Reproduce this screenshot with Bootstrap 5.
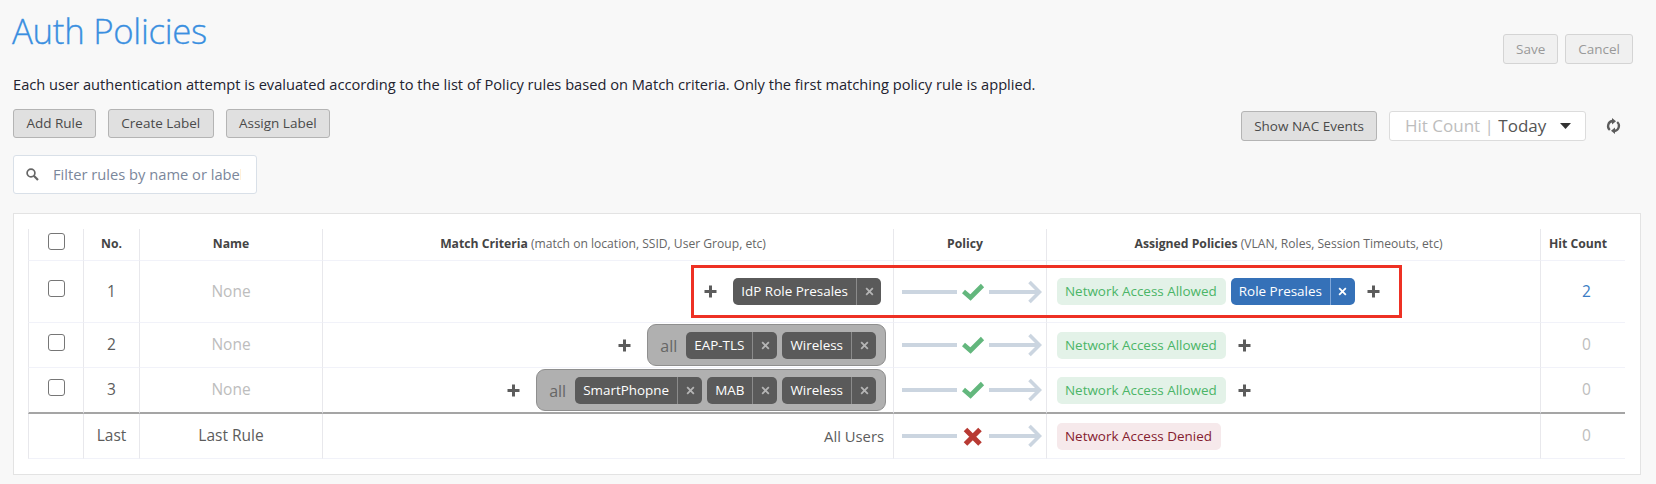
<!DOCTYPE html>
<html lang="en">
<head>
    <meta charset="UTF-8">
    <meta name="viewport" content="width=device-width, initial-scale=1.0">
    <title>Auth Policies</title>

    <link href="https://cdn.jsdelivr.net/npm/bootstrap@5.3.2/dist/css/bootstrap.min.css" rel="stylesheet">
    <script src="https://cdn.jsdelivr.net/npm/bootstrap@5.3.2/dist/js/bootstrap.bundle.min.js"></script>

    <style>
        body {
            height: 484px;
            overflow: hidden;
            background-color: #f8f8f8;
            font-family: "Open Sans", "Noto Sans", sans-serif;
            font-size: 15px;
            color: #5c5c5c;
        }

        .page-wrap {
            padding: 0 15px 0 13px;
        }

        .page-head {
            height: 72px;
            padding-top: 11px;
        }

        .page-title {
            margin-left: -1px;
            font-size: 34.8px;
            font-weight: 300;
            line-height: 40px;
            letter-spacing: -0.3px;
            color: #3a8fe0;
            -webkit-text-stroke: 0.3px #3a8fe0;
        }

        .head-actions {
            padding: 23px 8px 0 0;
            gap: 7px;
        }

        .intro-text {
            font-size: 14.64px;
            line-height: 24px;
            color: #23232f;
        }

        .btn-tool {
            height: 30px;
            padding: 0 12px;
            border: 1px solid #b4b4b4;
            border-radius: 3px;
            background-color: #e0e0e0;
            color: #4a4a4a;
            font-size: 13.5px;
            line-height: 27px;
        }

        .btn-tool:disabled {
            opacity: 1;
            border-color: #d4d4d4;
            background-color: #f0f0f0;
            color: #999;
        }

        .tool-row {
            height: 31px;
            margin-top: 13px;
        }

        .tool-left {
            gap: 12px;
        }

        .tool-left .btn-tool {
            height: 29px;
            padding: 0 12.4px;
        }

        .tool-right {
            height: 30px;
            margin-top: 2px;
            padding-right: 20px;
        }

        .hit-select {
            width: 197px;
            height: 30px;
            margin: 0 20px 0 12px;
            padding: 0 14px 0 15px;
            border: 1px solid #dcdcdc;
            border-radius: 3px;
            background-color: #fff;
            font-size: 17px;
            line-height: 26px;
            color: #555;
        }

        .hit-select .hit-label,
        .none-text,
        .hit-zero {
            color: #bdbdbd;
        }

        .filter-box {
            width: 244px;
            height: 39px;
            margin-top: 15px;
            padding: 0 14px 0 12px;
            border: 1px solid #d9e0e8;
            border-radius: 3px;
            background-color: #fff;
        }

        .filter-box input {
            width: 188px;
            margin-left: 14px;
            padding: 0;
            border: 0;
            font-size: 14.7px;
            outline: 0;
        }

        .filter-box input::placeholder {
            color: #7b879b;
            opacity: 1;
        }

        .rules-panel {
            height: 262px;
            margin-top: 19px;
            padding: 15px 15px 0 14px;
            border: 1px solid #e3e3e3;
            background-color: #fff;
        }

        .rules-table {
            width: 1597px;
            table-layout: fixed;
            border-collapse: separate;
            border-spacing: 0;
            margin: 0;
            color: #5c5c5c;
        }

        .rules-table > :not(caption) > * > * {
            padding: 0;
            border-width: 0 0 1px 1px;
            border-style: solid;
            border-color: #f1f2f9 #f1f2f9 #f1f2f9 #e8e8ec;
            font-size: 15.5px;
            vertical-align: middle;
            text-align: center;
            background: none;
        }

        .rules-table > thead > tr > th {
            height: 32px;
            font-size: 12.2px;
            font-weight: 700;
            color: #444;
        }

        .rules-table thead th small {
            font-size: 12.1px;
            font-weight: 400;
            color: #666;
        }

        .rules-table > thead > tr > th.th-shift { padding-right: 10px; }
        .rules-table > tbody > tr > td.cell-hits { padding-left: 7px; }

        .rules-table .row-tall td { height: 62px; }
        .rules-table .row-mid td { height: 45px; }
        .rules-table > tbody > .row-end > td { height: 46px; border-bottom: 2px solid #a5a5a5; }
        .rules-table .row-last td { height: 45px; }

        .rules-table > tbody > tr > td.cell-match { padding-right: 12px; }
        .rules-table > tbody > tr > td.cell-group { padding-right: 7px; }
        .rules-table > tbody > tr > td.cell-assign { padding-left: 10px; }
        .rules-table > tbody > tr > td.cell-users { padding-right: 9px; font-size: 14.8px; text-align: right; }

        .pick {
            display: block;
            width: 17px;
            height: 17px;
            margin: -6px auto 0 19px;
            border: 1px solid #767676;
            border-radius: 3px;
            background: #fff;
            appearance: none;
        }

        .tag {
            display: inline-flex;
            height: 27px;
            border-radius: 5px;
            background-color: #5a5a5a;
            color: #fff;
            font-size: 13.45px;
            line-height: 26px;
            white-space: nowrap;
        }

        .tag-text {
            padding: 0 8px;
        }

        .tag-close {
            display: flex;
            align-items: center;
            justify-content: center;
            width: 25px;
            border-left: 1px solid #8b8b8b;
            color: #b5b5b5;
        }

        .tag-role { margin-left: 5px; background-color: #3571b8; }
        .tag-role .tag-close { border-color: #7fa6d8; color: #fff; }
        .tag-allow { background-color: #e3f2e8; color: #4bb567; }
        .tag-deny { background-color: #f6e9eb; color: #85202f; }
        .tag-allow .tag-text, .tag-deny .tag-text { padding: 0 9px 0 8px; }

        .tag-group {
            height: 42px;
            padding: 0 9px 0 12px;
            gap: 5px;
            border: 1px solid #8f8f8f;
            border-radius: 9px;
            background-color: #b0b0b0;
            font-size: 16px;
            color: #666;
        }

        .tag-group .group-mode {
            margin-right: 4px;
            padding-top: 2px;
        }

        .add-after { margin-left: 12px; }

        .marked-flow {
            position: absolute;
            left: 677px;
            top: 51px;
            width: 711px;
            height: 53px;
            border: 3px solid #ee3124;
            pointer-events: none;
        }

        svg { display: block; flex: none; }
    </style>
</head>
<body>

    <!-- Icon shapes used in the rows -->
    <svg class="d-none">
        <symbol id="icon-plus" viewBox="0 0 13 13">
            <path d="M5 0.5h3v4.5h4.5v3H8v4.5H5V8H0.500V5H5z" fill="#5c5c5c"/>
        </symbol>
        <symbol id="icon-close" viewBox="0 0 10 10">
            <path d="M1.300 1.300l7.400 7.400M8.700 1.300l-7.400 7.400" stroke="currentColor" stroke-width="2" fill="none"/>
        </symbol>
        <symbol id="flow-line" viewBox="0 0 140 24">
            <path d="M0 12h55M87 12h50" stroke="#cbd5e0" stroke-width="3.800" fill="none"/>
            <path d="M127.500 2l10 10-10 10" stroke="#cbd5e0" stroke-width="3.600" fill="none"/>
        </symbol>
        <symbol id="flow-allow" viewBox="0 0 140 24">
            <use href="#flow-line" width="140" height="24"/>
            <path d="M61.500 11.500l7 6L80.500 5.500" stroke="#63b77d" stroke-width="4.600" fill="none"/>
        </symbol>
        <symbol id="flow-deny" viewBox="0 0 140 24">
            <use href="#flow-line" width="140" height="24"/>
            <path d="M63.500 5.500l14.500 14.500M78 5.500L63.500 20" stroke="#b83a33" stroke-width="5" fill="none"/>
        </symbol>
    </svg>

    <div class="page-wrap">
        <div class="page-head d-flex justify-content-between">
            <h1 class="page-title mb-0">Auth Policies</h1>
            <div class="head-actions d-flex">
                <button class="btn btn-tool" disabled>Save</button>
                <button class="btn btn-tool" disabled>Cancel</button>
            </div>
        </div>

        <p class="intro-text mb-0">Each user authentication attempt is evaluated according to the list of Policy rules based on Match criteria. Only the first matching policy rule is applied.</p>

        <div class="tool-row d-flex justify-content-between">
            <div class="tool-left d-flex">
                <button class="btn btn-tool">Add Rule</button>
                <button class="btn btn-tool">Create Label</button>
                <button class="btn btn-tool">Assign Label</button>
            </div>
            <div class="tool-right d-flex align-items-center">
                <button class="btn btn-tool">Show NAC Events</button>
                <div class="hit-select d-flex align-items-center justify-content-between">
                    <span><span class="hit-label">Hit Count |</span> Today</span>
                    <svg width="11" height="6" viewBox="0 0 11 6"><path d="M0 0h11L5.500 6z" fill="#333"/></svg>
                </div>
                <svg width="15" height="16" viewBox="0 0 15 16">
                    <path d="M3.800 12A5.200 5.200 0 0 1 6.300 3M11.200 4A5.200 5.200 0 0 1 8.700 13" stroke="#5c5c5c" stroke-width="2.300" fill="none"/>
                    <path d="M6 0l4 3.200L6 6.400zM9 9.600v6.400l-4-3.200z" fill="#5c5c5c"/>
                </svg>
            </div>
        </div>

        <div class="filter-box d-flex align-items-center">
            <svg width="13" height="13" viewBox="0 0 13 13">
                <circle cx="5" cy="5" r="3.900" stroke="#666" stroke-width="1.700" fill="none"/>
                <path d="M7.800 7.800l4.200 4.200" stroke="#666" stroke-width="2.200"/>
            </svg>
            <input type="text" placeholder="Filter rules by name or label">
        </div>

        <div class="rules-panel position-relative">
            <table class="table rules-table">
                <colgroup>
                    <col style="width: 55px">
                    <col style="width: 56px">
                    <col style="width: 183px">
                    <col style="width: 571px">
                    <col style="width: 153px">
                    <col style="width: 494px">
                    <col>
                </colgroup>
                <thead>
                    <tr>
                        <th><input type="checkbox" class="pick"></th>
                        <th>No.</th>
                        <th>Name</th>
                        <th class="th-shift">Match Criteria <small>(match on location, SSID, User Group, etc)</small></th>
                        <th class="th-shift">Policy</th>
                        <th class="th-shift">Assigned Policies <small>(VLAN, Roles, Session Timeouts, etc)</small></th>
                        <th class="th-shift">Hit Count</th>
                    </tr>
                </thead>
                <tbody>
                    <tr class="row-tall">
                        <td><input type="checkbox" class="pick"></td>
                        <td>1</td>
                        <td class="none-text">None</td>
                        <td class="cell-match">
                            <div class="d-flex align-items-center justify-content-end">
                                <svg class="me-3" width="13" height="13"><use href="#icon-plus"/></svg>
                                <span class="tag"><span class="tag-text">IdP Role Presales</span><span class="tag-close"><svg width="9" height="9"><use href="#icon-close"/></svg></span></span>
                            </div>
                        </td>
                        <td><svg class="ms-2" width="140" height="24"><use href="#flow-allow"/></svg></td>
                        <td class="cell-assign">
                            <div class="d-flex align-items-center">
                                <span class="tag tag-allow"><span class="tag-text">Network Access Allowed</span></span>
                                <span class="tag tag-role"><span class="tag-text">Role Presales</span><span class="tag-close"><svg width="9" height="9"><use href="#icon-close"/></svg></span></span>
                                <svg class="add-after" width="13" height="13"><use href="#icon-plus"/></svg>
                            </div>
                        </td>
                        <td class="cell-hits" style="color: #3a7cc4">2</td>
                    </tr>
                    <tr class="row-mid">
                        <td><input type="checkbox" class="pick"></td>
                        <td>2</td>
                        <td class="none-text">None</td>
                        <td class="cell-group">
                            <div class="d-flex align-items-center justify-content-end">
                                <svg class="me-3" width="13" height="13"><use href="#icon-plus"/></svg>
                                <div class="tag-group d-flex align-items-center">
                                    <span class="group-mode">all</span>
                                    <span class="tag"><span class="tag-text">EAP-TLS</span><span class="tag-close"><svg width="9" height="9"><use href="#icon-close"/></svg></span></span>
                                    <span class="tag"><span class="tag-text">Wireless</span><span class="tag-close"><svg width="9" height="9"><use href="#icon-close"/></svg></span></span>
                                </div>
                            </div>
                        </td>
                        <td><svg class="ms-2" width="140" height="24"><use href="#flow-allow"/></svg></td>
                        <td class="cell-assign">
                            <div class="d-flex align-items-center">
                                <span class="tag tag-allow"><span class="tag-text">Network Access Allowed</span></span>
                                <svg class="add-after" width="13" height="13"><use href="#icon-plus"/></svg>
                            </div>
                        </td>
                        <td class="hit-zero cell-hits">0</td>
                    </tr>
                    <tr class="row-end">
                        <td><input type="checkbox" class="pick"></td>
                        <td>3</td>
                        <td class="none-text">None</td>
                        <td class="cell-group">
                            <div class="d-flex align-items-center justify-content-end">
                                <svg class="me-3" width="13" height="13"><use href="#icon-plus"/></svg>
                                <div class="tag-group d-flex align-items-center">
                                    <span class="group-mode">all</span>
                                    <span class="tag"><span class="tag-text">SmartPhopne</span><span class="tag-close"><svg width="9" height="9"><use href="#icon-close"/></svg></span></span>
                                    <span class="tag"><span class="tag-text">MAB</span><span class="tag-close"><svg width="9" height="9"><use href="#icon-close"/></svg></span></span>
                                    <span class="tag"><span class="tag-text">Wireless</span><span class="tag-close"><svg width="9" height="9"><use href="#icon-close"/></svg></span></span>
                                </div>
                            </div>
                        </td>
                        <td><svg class="ms-2" width="140" height="24"><use href="#flow-allow"/></svg></td>
                        <td class="cell-assign">
                            <div class="d-flex align-items-center">
                                <span class="tag tag-allow"><span class="tag-text">Network Access Allowed</span></span>
                                <svg class="add-after" width="13" height="13"><use href="#icon-plus"/></svg>
                            </div>
                        </td>
                        <td class="hit-zero cell-hits">0</td>
                    </tr>
                    <tr class="row-last">
                        <td></td>
                        <td>Last</td>
                        <td>Last Rule</td>
                        <td class="cell-users">All Users</td>
                        <td><svg class="ms-2" width="140" height="24"><use href="#flow-deny"/></svg></td>
                        <td class="cell-assign">
                            <div class="d-flex align-items-center">
                                <span class="tag tag-deny"><span class="tag-text">Network Access Denied</span></span>
                            </div>
                        </td>
                        <td class="hit-zero cell-hits">0</td>
                    </tr>
                </tbody>
            </table>

            <!-- Frame around the first rule's flow -->
            <div class="marked-flow"></div>
        </div>
    </div>

</body>
</html>
